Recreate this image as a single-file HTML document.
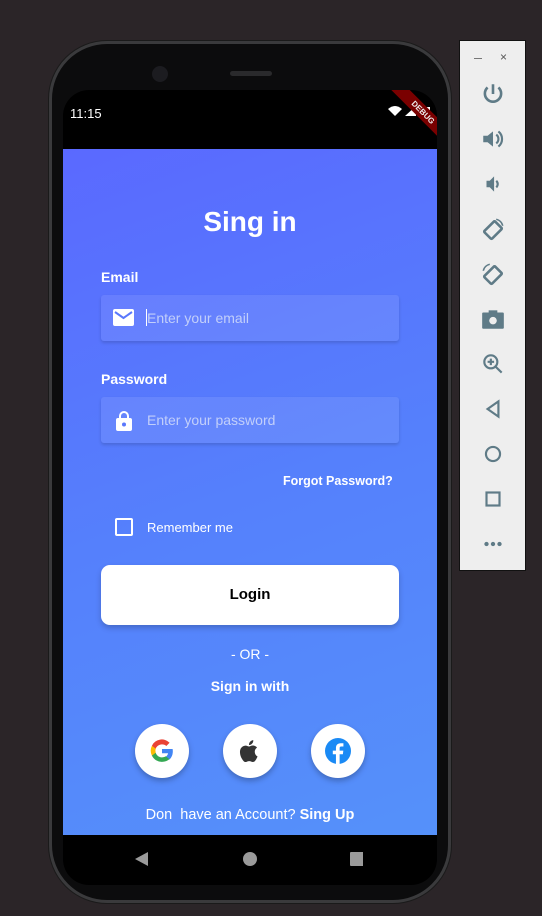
<!DOCTYPE html>
<html><head><style>
*{margin:0;padding:0;box-sizing:border-box}
body{width:542px;height:916px;overflow:hidden;background:#2b2528;font-family:"Liberation Sans",sans-serif;position:relative}
.abs{position:absolute}
.phone{left:49px;top:41px;width:402px;height:862px;border-radius:58px;background:#0c0c0d;border:3px solid #3a3a3c;box-shadow:0 0 0 1px #1a1a1a}
.screen{left:63px;top:90px;width:374px;height:795px;border-radius:26px;background:#000;overflow:hidden}
.app{left:63px;top:149px;width:374px;height:686px;background:linear-gradient(160deg,#5a69ff 0%,#5580fc 50%,#5591fa 100%)}
.w{color:#fff}
.field{left:101px;width:298px;height:46px;background:rgba(255,255,255,0.09);box-shadow:0 2px 3px rgba(0,0,0,0.15);border-radius:3px}
.ph{color:#c2cffa;font-size:14px;position:absolute;left:46px;top:15px}
.btn{left:101px;top:565px;width:298px;height:60px;background:#fff;border-radius:9px;box-shadow:0 3px 6px rgba(0,0,0,0.2);text-align:center;line-height:60px;font-weight:bold;font-size:15px}
.circ{width:54px;height:54px;border-radius:50%;background:#fff;top:724px;box-shadow:0 3px 6px rgba(0,0,0,0.25);display:flex;align-items:center;justify-content:center}
.panel{left:459px;top:40px;width:67px;height:531px;background:#eeeeee;border:1px solid #111}
.ic{position:absolute;left:20px;width:26px;height:26px}
</style></head><body>
<div class="abs phone"></div>
<div class="abs" style="left:152px;top:66px;width:16px;height:16px;border-radius:50%;background:#1c1c20"></div>
<div class="abs" style="left:230px;top:71px;width:42px;height:5px;border-radius:3px;background:#2a2a2c"></div>
<div class="abs screen">
<svg class="abs" style="left:325px;top:14px" width="46" height="16"><path d="M0 5 Q7 -1 14 5 L7 12Z" fill="#fff"/><path d="M17 12 L28 2 L28 12Z" fill="#fff"/><rect x="36" y="3" width="6" height="10" fill="#fff"/></svg>
<div class="abs" style="left:320px;top:16px;width:80px;height:13px;background:#7a0000;transform:rotate(45deg);color:#eee;font-size:8px;font-weight:bold;text-align:center;line-height:13px">DEBUG</div>
</div>
<div class="abs w" style="left:70px;top:106px;font-size:13px">11:15</div>
<div class="abs app"></div>
<div class="abs w" style="left:63px;width:374px;top:206px;text-align:center;font-size:28px;font-weight:bold">Sing in</div>
<div class="abs w" style="left:101px;top:269px;font-size:14px;font-weight:bold">Email</div>
<div class="abs field" style="top:295px"><svg class="abs" style="left:12px;top:14px" width="22" height="18"><rect x="0" y="0" width="21" height="17" rx="2" fill="#fff"/><path d="M2 3 L10.5 9 L19 3" stroke="#5a78fc" stroke-width="2" fill="none"/></svg><div class="abs" style="left:45px;top:14px;width:1px;height:17px;background:#fff"></div><span class="ph">Enter your email</span></div>
<div class="abs w" style="left:101px;top:371px;font-size:14px;font-weight:bold">Password</div>
<div class="abs field" style="top:397px"><svg class="abs" style="left:15px;top:13px" width="16" height="21"><path d="M4 9 V6 a4 4 0 0 1 8 0 V9" stroke="#fff" stroke-width="2" fill="none"/><rect x="0" y="8" width="16" height="13" rx="2" fill="#fff"/><circle cx="8" cy="14.5" r="2" fill="#5a78fc"/></svg><span class="ph">Enter your password</span></div>
<div class="abs w" style="left:283px;top:474px;font-size:12.5px;font-weight:bold">Forgot Password?</div>
<div class="abs" style="left:115px;top:518px;width:18px;height:18px;border:2px solid #fff;border-radius:2px"></div>
<div class="abs w" style="left:147px;top:520px;font-size:13px">Remember me</div>
<div class="abs btn">Login</div>
<div class="abs w" style="left:63px;width:374px;top:646px;text-align:center;font-size:14px">- OR -</div>
<div class="abs w" style="left:63px;width:374px;top:678px;text-align:center;font-size:14px;font-weight:bold">Sign in with</div>
<div class="abs circ" style="left:135px"><svg width="26" height="26" viewBox="0 0 24 24"><path d="M22 12.2c0-.7-.1-1.4-.2-2H12v3.9h5.6a4.8 4.8 0 0 1-2.1 3.1v2.6h3.4c2-1.8 3.1-4.5 3.1-7.6z" fill="#4285F4"/><path d="M12 22c2.8 0 5.2-.9 6.9-2.5l-3.4-2.6c-.9.6-2.1 1-3.5 1-2.7 0-5-1.8-5.8-4.3H2.7v2.7A10 10 0 0 0 12 22z" fill="#34A853"/><path d="M6.2 13.6a6 6 0 0 1 0-3.8V7.1H2.7a10 10 0 0 0 0 9.2z" fill="#FBBC05"/><path d="M12 5.9c1.5 0 2.9.5 4 1.5l3-3A10 10 0 0 0 2.7 7.1l3.5 2.7C7 7.7 9.3 5.9 12 5.9z" fill="#EA4335"/></svg></div>
<div class="abs circ" style="left:223px"><svg width="26" height="26" viewBox="0 0 24 24"><path d="M16.4 12.6c0-2.5 2-3.6 2.1-3.7-1.2-1.7-3-1.9-3.6-2-1.5-.2-3 .9-3.8.9-.8 0-2-.9-3.300-.8-1.7 0-3.3 1-4.2 2.5-1.8 3.1-.5 7.7 1.3 10.2.8 1.200 1.8 2.600 3.1 2.500 1.3 0 1.7-.8 3.3-.8 1.5 0 1.9.8 3.3.8 1.4 0 2.2-1.2 3-2.4 1-1.4 1.3-2.7 1.4-2.8-.1 0-2.6-1-2.6-4.4zM14 5.1c.7-.8 1.2-2 1-3.1-1 0-2.2.7-2.9 1.5-.6.7-1.2 1.9-1 3 1.1.1 2.2-.6 2.9-1.4z" fill="#333"/></svg></div>
<div class="abs circ" style="left:311px"><svg width="26" height="26" viewBox="0 0 24 24"><circle cx="12" cy="12" r="12" fill="#1a8af5"/><path d="M13.5 24V15h3l.4-3.4h-3.4V9.5c0-1 .3-1.6 1.7-1.6h1.8v-3a24 24 0 0 0-2.6-.1c-2.6 0-4.3 1.6-4.3 4.4v2.4H7.2V15h2.9v9z" fill="#fff"/></svg></div>
<div class="abs w" style="left:63px;width:374px;top:807px;text-align:center;font-size:14.5px">Don&nbsp; have an Account? <b>Sing Up</b></div>
<svg class="abs" style="left:133px;top:850px" width="230" height="18"><path d="M2 9 L15 2 L15 16Z" fill="#9a9a9a"/><circle cx="117" cy="9" r="7" fill="#9a9a9a"/><rect x="217" y="2" width="14" height="14" rx="1" fill="#9a9a9a"/></svg>
<div class="abs panel">
<div class="abs" style="left:14px;top:17px;width:8px;height:1px;background:#777"></div>
<div class="abs" style="left:40px;top:9px;font-size:12px;color:#555">×</div>
<svg class="ic" style="top:40px" viewBox="0 0 24 24"><path d="M12 3v9M7 6a7.5 7.5 0 1 0 10 0" stroke="#5f7b87" stroke-width="2.4" fill="none"/></svg>
<svg class="ic" style="top:85px" viewBox="0 0 24 24"><path d="M3 9h4l5-4v14l-5-4H3z" fill="#5f7b87"/><path d="M15 8a5 5 0 0 1 0 8M17 5a9 9 0 0 1 0 14" stroke="#5f7b87" stroke-width="2" fill="none"/></svg>
<svg class="ic" style="top:130px" viewBox="0 0 24 24"><path d="M6 9h3l4-4v14l-4-4H6z" fill="#5f7b87"/><path d="M15 9a4 4 0 0 1 0 6" stroke="#5f7b87" stroke-width="2" fill="none"/></svg>
<svg class="ic" style="top:175px" viewBox="0 0 24 24"><rect x="7" y="6" width="10" height="14" rx="1" transform="rotate(45 12 13)" stroke="#5f7b87" stroke-width="2.4" fill="none"/><path d="M15 3a8 8 0 0 1 6 6" stroke="#5f7b87" stroke-width="1.5" fill="none"/></svg>
<svg class="ic" style="top:220px" viewBox="0 0 24 24"><rect x="7" y="6" width="10" height="14" rx="1" transform="rotate(45 12 13)" stroke="#5f7b87" stroke-width="2.4" fill="none"/><path d="M3 9a8 8 0 0 1 6-6" stroke="#5f7b87" stroke-width="1.5" fill="none"/></svg>
<svg class="ic" style="top:265px" viewBox="0 0 24 24"><rect x="2" y="6" width="20" height="15" rx="1" fill="#5f7b87"/><rect x="8" y="4" width="8" height="3" fill="#5f7b87"/><circle cx="12" cy="13.5" r="3.5" fill="#eee"/></svg>
<svg class="ic" style="top:310px" viewBox="0 0 24 24"><circle cx="10" cy="10" r="6" stroke="#5f7b87" stroke-width="2" fill="none"/><path d="M14.5 14.5L20 20M10 7v6M7 10h6" stroke="#5f7b87" stroke-width="2"/></svg>
<svg class="ic" style="top:355px" viewBox="0 0 24 24"><path d="M17 5L7 12l10 7z" stroke="#5f7b87" stroke-width="2" fill="none"/></svg>
<svg class="ic" style="top:400px" viewBox="0 0 24 24"><circle cx="12" cy="12" r="6.5" stroke="#5f7b87" stroke-width="2" fill="none"/></svg>
<svg class="ic" style="top:445px" viewBox="0 0 24 24"><rect x="6" y="6" width="12" height="12" stroke="#5f7b87" stroke-width="2" fill="none"/></svg>
<svg class="ic" style="top:490px" viewBox="0 0 24 24"><circle cx="6" cy="12" r="2" fill="#5f7b87"/><circle cx="12" cy="12" r="2" fill="#5f7b87"/><circle cx="18" cy="12" r="2" fill="#5f7b87"/></svg>
</div>
</body></html>
